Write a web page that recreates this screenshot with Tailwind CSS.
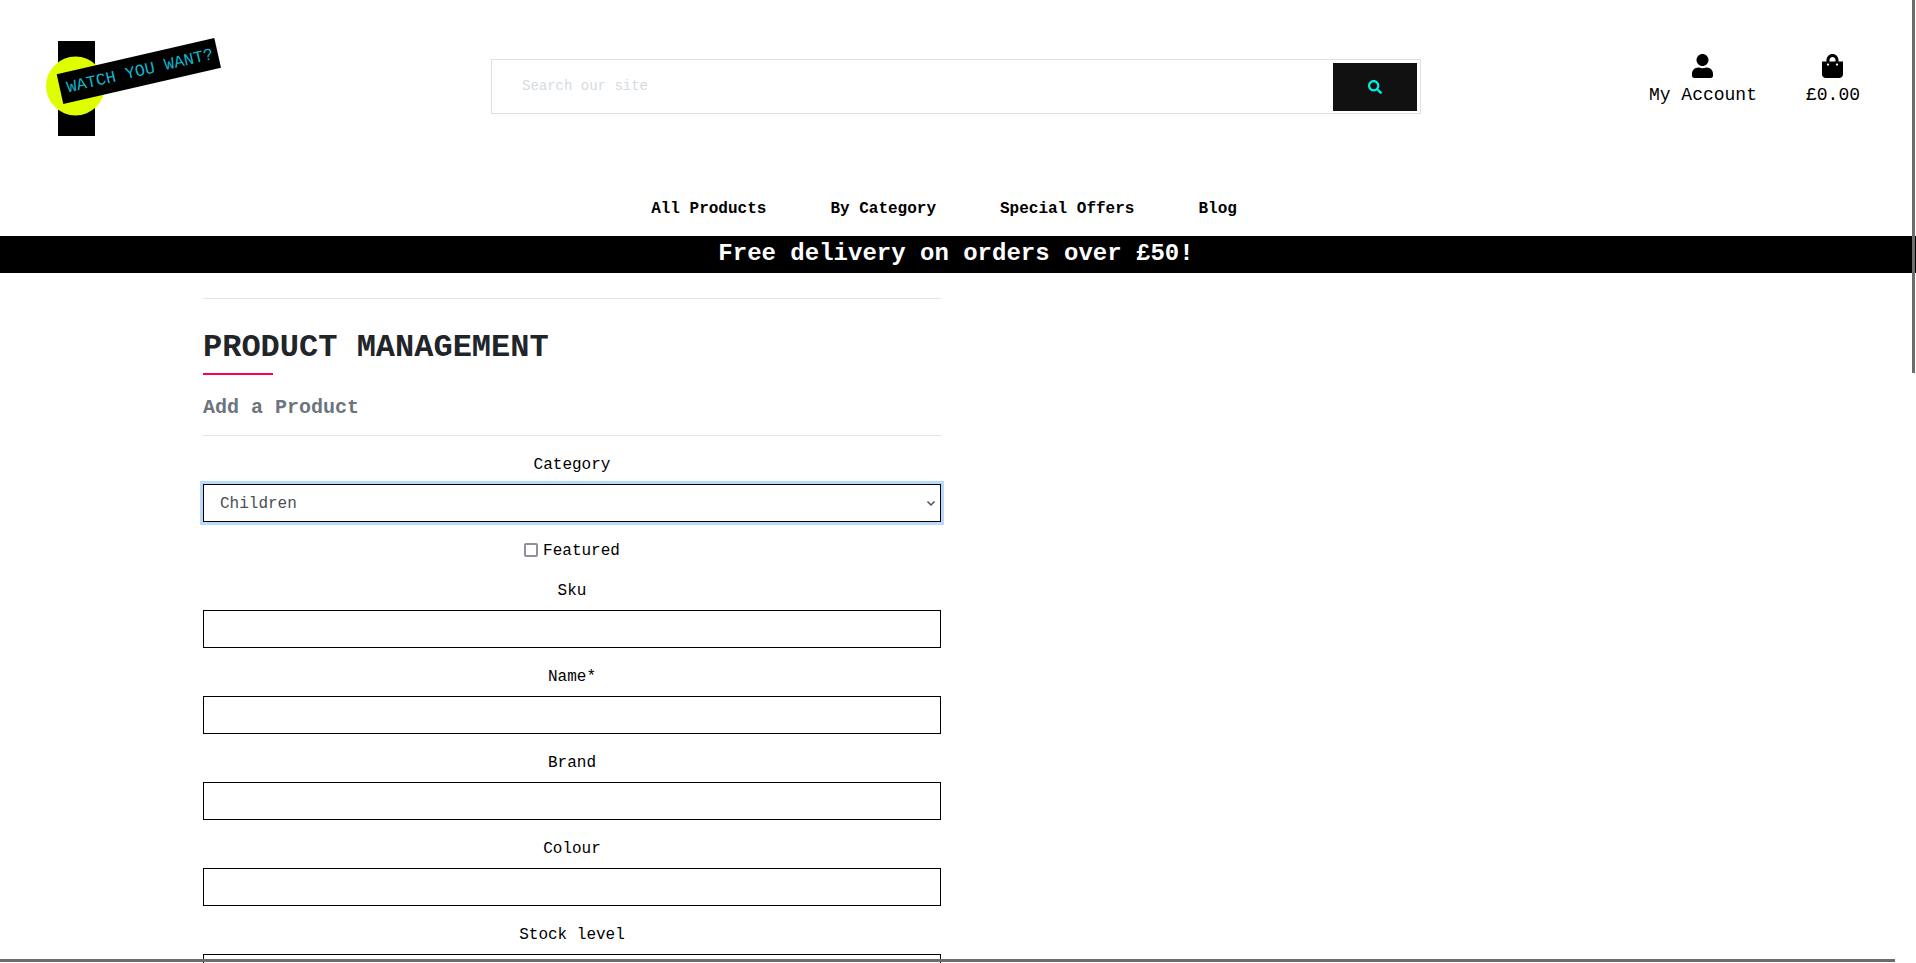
<!DOCTYPE html>
<html lang="en">
<head>
<meta charset="utf-8">
<meta name="viewport" content="width=device-width, initial-scale=1">
<title>Watch You Want? - Product Management</title>
<script src="https://cdn.jsdelivr.net/npm/@tailwindcss/browser@4"></script>
</head>
<body class="h-screen overflow-hidden bg-white pr-1 font-['Liberation_Mono',monospace] text-base text-black">
  <header>
    <div class="grid grid-cols-[1fr_2fr_1fr] items-start">
      <a href="#" aria-label="Watch You Want? home" class="block pt-8 pl-11">
        <svg class="h-[110px] w-[180px]" viewBox="44 32 180 110">
          <rect x="58" y="41" width="37" height="95" fill="#000"/>
          <circle cx="75.5" cy="86" r="29.5" fill="#dfff00"/>
          <polygon points="56.7,74.3 214.3,38 221,67.7 63.3,104" fill="#000"/>
          <text x="68" y="92.500" transform="rotate(-13 68 92.500)" font-family="Liberation Mono, monospace" font-size="16.700" fill="#12b5cb">WATCH YOU WANT?</text>
        </svg>
      </a>
      <form class="px-[13px] pt-[59px]">
        <div class="flex h-[55px] items-center border border-[#e0e0e0] pr-[3px]">
          <input type="text" aria-label="Search our site" placeholder="Search our site" class="h-12 min-w-0 flex-1 px-[30px] pb-0.5 text-sm outline-none placeholder:text-[#d3dbe2]">
          <button type="button" aria-label="Search" class="flex h-12 w-[84px] items-center justify-center bg-[#111]">
            <svg class="size-3.5" viewBox="0 0 512 512" fill="#00f0e0"><path d="M505 442.7L405.3 343c-4.5-4.5-10.6-7-17-7H372c27.6-35.3 44-79.7 44-128C416 93.1 322.9 0 208 0S0 93.1 0 208s93.1 208 208 208c48.3 0 92.7-16.4 128-44v16.3c0 6.4 2.5 12.5 7 17l99.7 99.7c9.4 9.4 24.6 9.4 33.9 0l28.3-28.3c9.4-9.4 9.4-24.6.1-34zM208 336c-70.7 0-128-57.2-128-128 0-70.7 57.2-128 128-128 70.7 0 128 57.2 128 128 0 70.7-57.2 128-128 128z"/></svg>
          </button>
        </div>
      </form>
      <div class="flex justify-end gap-[49px] pt-[54px] pr-[52px] text-lg/[27px]">
        <a href="#" class="flex flex-col items-center gap-1">
          <svg class="h-6 w-[21px]" viewBox="0 0 448 512"><path d="M224 256c70.7 0 128-57.3 128-128S294.7 0 224 0 96 57.3 96 128s57.3 128 128 128zm89.6 32h-16.7c-22.2 10.2-46.9 16-72.9 16s-50.6-5.8-72.9-16h-16.7C60.2 288 0 348.2 0 422.4V464c0 26.5 21.5 48 48 48h352c26.5 0 48-21.5 48-48v-41.6c0-74.2-60.2-134.4-134.4-134.4z"/></svg>
          <span>My Account</span>
        </a>
        <a href="#" class="flex flex-col items-center gap-1">
          <svg class="h-6 w-[21px]" viewBox="0 0 448 512"><path d="M352 160v-32C352 57.42 294.579 0 224 0 153.42 0 96 57.42 96 128v32H0v272c0 44.183 35.817 80 80 80h288c44.183 0 80-35.817 80-80V160h-96zm-192-32c0-35.29 28.71-64 64-64s64 28.71 64 64v32H160v-32zm160 120c-13.255 0-24-10.745-24-24s10.745-24 24-24 24 10.745 24 24-10.745 24-24 24zm-192 0c-13.255 0-24-10.745-24-24s10.745-24 24-24 24 10.745 24 24-10.745 24-24 24z"/></svg>
          <span>£0.00</span>
        </a>
      </div>
    </div>
    <nav class="flex justify-center gap-16 pt-[55px] pr-6 pb-[15px] leading-6 font-bold">
      <a href="#">All Products</a>
      <a href="#">By Category</a>
      <a href="#">Special Offers</a>
      <a href="#">Blog</a>
    </nav>
    <p class="-mr-1 bg-black pt-1 pr-1 pb-[5px] text-center text-2xl/7 font-bold text-white">Free delivery on orders over £50!</p>
  </header>

  <main class="grid grid-cols-2 gap-[30px] px-[203px]">
    <div>
      <hr class="mt-[25px] border-[#e5e5e5]">
      <h1 class="mt-[30px] text-[32px]/[38px] font-bold text-[#212529]">PRODUCT MANAGEMENT</h1>
      <div class="mt-1.5 h-0.5 w-[70px] bg-[#ff0050]"></div>
      <h2 class="mt-[21px] text-xl/6 font-bold text-[#6c757d]">Add a Product</h2>
      <hr class="mt-[15px] mb-[17px] border-[#e5e5e5]">
      <form class="flex flex-col gap-[17px] text-center leading-6">
        <div class="flex flex-col gap-[7px]">
          <label for="category">Category</label>
          <div class="relative">
            <select id="category" class="block h-[38px] w-full appearance-none border border-black bg-white px-4 pt-0.5 text-[#495057] ring-3 ring-[#b9dafc] outline-none">
              <option>Children</option>
            </select>
            <svg class="pointer-events-none absolute top-4 right-1.5 h-[7px] w-2" viewBox="0 0 8 7" fill="none" stroke="#495057" stroke-width="1.5"><path d="M.5 1.5 4 5l3.500-3.500"/></svg>
          </div>
        </div>
        <div class="-mb-px flex items-start justify-center gap-[5px]">
          <input id="featured" type="checkbox" class="mt-1 size-3.5 appearance-none rounded-xs border-2 border-[#8f8f9d] bg-white">
          <label for="featured">Featured</label>
        </div>
        <div class="flex flex-col gap-[7px]">
          <label for="sku">Sku</label>
          <input id="sku" type="text" class="h-[38px] w-full border border-black px-4">
        </div>
        <div class="flex flex-col gap-[7px]">
          <label for="name">Name*</label>
          <input id="name" type="text" class="h-[38px] w-full border border-black px-4">
        </div>
        <div class="flex flex-col gap-[7px]">
          <label for="brand">Brand</label>
          <input id="brand" type="text" class="h-[38px] w-full border border-black px-4">
        </div>
        <div class="flex flex-col gap-[7px]">
          <label for="colour">Colour</label>
          <input id="colour" type="text" class="h-[38px] w-full border border-black px-4">
        </div>
        <div class="flex flex-col gap-[7px]">
          <label for="stock">Stock level</label>
          <input id="stock" type="text" class="h-[38px] w-full border border-black px-4">
        </div>
      </form>
    </div>
  </main>

  <!-- Overlay scroll indicators -->
  <div class="fixed top-0 right-px h-[373px] w-[3px] bg-[#6d6d6d]"></div>
  <div class="fixed right-[21px] bottom-px left-0 h-[3px] bg-[#6d6d6d]"></div>
</body>
</html>
